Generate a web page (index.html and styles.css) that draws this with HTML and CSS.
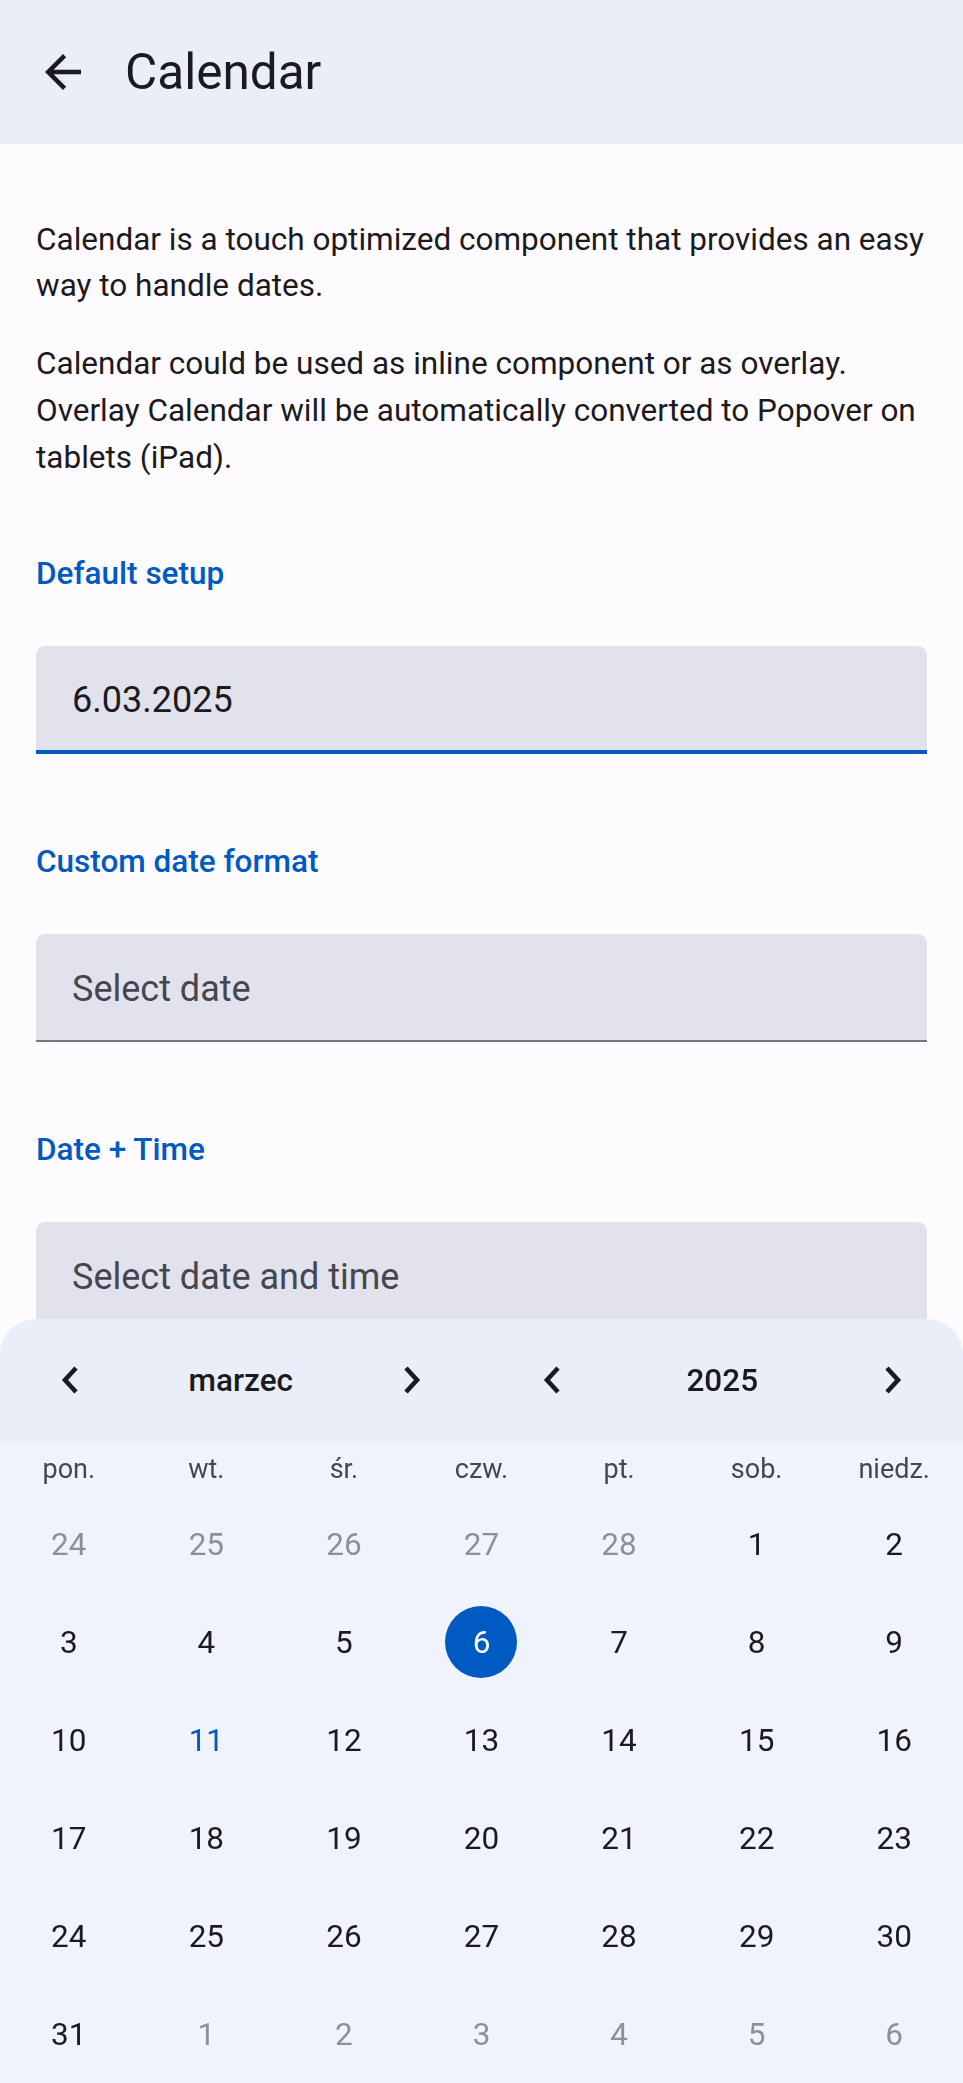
FILE: index.html
```html
<!DOCTYPE html>
<html lang="pl">
<head>
<meta charset="utf-8">
<title>Calendar</title>
<link rel="stylesheet" href="styles.css">
</head>
<body>
<header class="navbar">
  <div class="back">
    <svg viewBox="0 0 24 24" width="54" height="54"><path d="M20 11H7.83l5.59-5.59L12 4l-8 8 8 8 1.41-1.41L7.83 13H20v-2z" fill="#1b1b1f"/></svg>
  </div>
  <div class="title">Calendar</div>
</header>
<main class="page">
  <div class="intro">
    <p>Calendar is a touch optimized component that provides an easy way to handle dates.</p>
    <p>Calendar could be used as inline component or as overlay. Overlay Calendar will be automatically converted to Popover on tablets (iPad).</p>
  </div>
  <div class="block-title first">Default setup</div>
  <div class="field focused"><span class="value">6.03.2025</span></div>
  <div class="block-title">Custom date format</div>
  <div class="field"><span class="placeholder">Select date</span></div>
  <div class="block-title">Date + Time</div>
  <div class="field"><span class="placeholder">Select date and time</span></div>
</main>
<div class="calendar-sheet">
  <div class="cal-toolbar">
    <div class="picker">
      <div class="arrow"><svg viewBox="0 0 18 28" width="18" height="28"><path d="M15 2 L4 14 L15 26" fill="none" stroke="#1b1b1f" stroke-width="4.6"/></svg></div>
      <div class="picker-value">marzec</div>
      <div class="arrow"><svg viewBox="0 0 18 28" width="18" height="28"><path d="M3 2 L14 14 L3 26" fill="none" stroke="#1b1b1f" stroke-width="4.6"/></svg></div>
    </div>
    <div class="picker">
      <div class="arrow"><svg viewBox="0 0 18 28" width="18" height="28"><path d="M15 2 L4 14 L15 26" fill="none" stroke="#1b1b1f" stroke-width="4.6"/></svg></div>
      <div class="picker-value">2025</div>
      <div class="arrow"><svg viewBox="0 0 18 28" width="18" height="28"><path d="M3 2 L14 14 L3 26" fill="none" stroke="#1b1b1f" stroke-width="4.6"/></svg></div>
    </div>
  </div>
  <div class="cal-weekdays">
    <div>pon.</div><div>wt.</div><div>śr.</div><div>czw.</div><div>pt.</div><div>sob.</div><div>niedz.</div>
  </div>
  <div class="cal-days">
    <div class="week"><div class="day other">24</div><div class="day other">25</div><div class="day other">26</div><div class="day other">27</div><div class="day other">28</div><div class="day">1</div><div class="day">2</div></div>
    <div class="week"><div class="day">3</div><div class="day">4</div><div class="day">5</div><div class="day selected"><span>6</span></div><div class="day">7</div><div class="day">8</div><div class="day">9</div></div>
    <div class="week"><div class="day">10</div><div class="day today">11</div><div class="day">12</div><div class="day">13</div><div class="day">14</div><div class="day">15</div><div class="day">16</div></div>
    <div class="week"><div class="day">17</div><div class="day">18</div><div class="day">19</div><div class="day">20</div><div class="day">21</div><div class="day">22</div><div class="day">23</div></div>
    <div class="week"><div class="day">24</div><div class="day">25</div><div class="day">26</div><div class="day">27</div><div class="day">28</div><div class="day">29</div><div class="day">30</div></div>
    <div class="week"><div class="day">31</div><div class="day other">1</div><div class="day other">2</div><div class="day other">3</div><div class="day other">4</div><div class="day other">5</div><div class="day other">6</div></div>
  </div>
</div>
</body>
</html>
```
FILE: styles.css
```css
html, body {
  margin: 0;
  padding: 0;
}
body {
  font-family: Roboto, "Noto Sans", sans-serif;
  background: #fefbff;
  color: #1b1b1f;
  min-height: 2083px;
}
.navbar {
  height: 144px;
  background: #e9eef9;
  display: flex;
  align-items: center;
}
.back {
  width: 54px;
  height: 54px;
  margin-left: 36px;
  display: flex;
}
.title {
  margin-left: 35px;
  font-size: 49.5px;
  line-height: 58px;
  color: #1b1b1f;
}
.page {
  padding: 0 36px;
}
.intro {
  padding-top: 72.5px;
  margin-right: -6px;
}
.intro p {
  margin: 0;
  font-size: 31.5px;
  line-height: 46.8px;
}
.intro p + p {
  margin-top: 31.4px;
}
.block-title {
  margin-top: 90.4px;
  font-size: 31.5px;
  line-height: 35.1px;
  font-weight: 500;
  color: #005ac1;
}
.block-title.first {
  margin-top: 74.2px;
}
.field {
  margin-top: 54.7px;
  height: 108px;
  box-sizing: border-box;
  background: #e1e2ec;
  border-radius: 9px 9px 0 0;
  border-bottom: 2.25px solid #74777f;
  padding: 3px 36px 0;
  display: flex;
  align-items: center;
  font-size: 36px;
}
.field.focused {
  border-bottom: 4.5px solid #005ac1;
}
.field .value {
  color: #1b1b1f;
  position: relative;
  top: 1px;
}
.field .placeholder {
  color: #45464f;
}
.calendar-sheet {
  position: fixed;
  left: 0;
  right: 0;
  bottom: 0;
  height: 764px;
  border-radius: 36px 36px 0 0;
  overflow: hidden;
  background: #f0f3fc;
  display: flex;
  flex-direction: column;
}
.cal-toolbar {
  height: 122.7px;
  background: #e9eef9;
  display: grid;
  grid-template-columns: 1fr 1fr;
}
.picker {
  display: flex;
  align-items: center;
}
.arrow {
  width: 140px;
  display: flex;
  justify-content: center;
  align-items: center;
}
.picker-value {
  flex: 1;
  text-align: center;
  font-size: 31.5px;
  font-weight: 500;
  color: #1b1b1f;
}
.cal-weekdays {
  height: 53px;
  box-sizing: border-box;
  padding-top: 2.6px;
  display: grid;
  grid-template-columns: repeat(7, 1fr);
  align-items: center;
  font-size: 27px;
  color: #45464f;
  text-align: center;
}
.cal-days {
  flex: 1;
  display: flex;
  flex-direction: column;
}
.week {
  height: 98px;
  display: grid;
  grid-template-columns: repeat(7, 1fr);
}
.day {
  display: flex;
  justify-content: center;
  align-items: center;
  padding-top: 2px;
  font-size: 31.5px;
  color: #1b1b1f;
}
.day.other {
  color: #8f9097;
}
.day.today {
  color: #005ac1;
}
.day.selected {
  padding-top: 0;
}
.day.selected span {
  width: 72px;
  height: 72px;
  border-radius: 50%;
  background: #005ac1;
  color: #ffffff;
  display: flex;
  justify-content: center;
  align-items: center;
  padding-top: 2px;
  box-sizing: border-box;
}
```
